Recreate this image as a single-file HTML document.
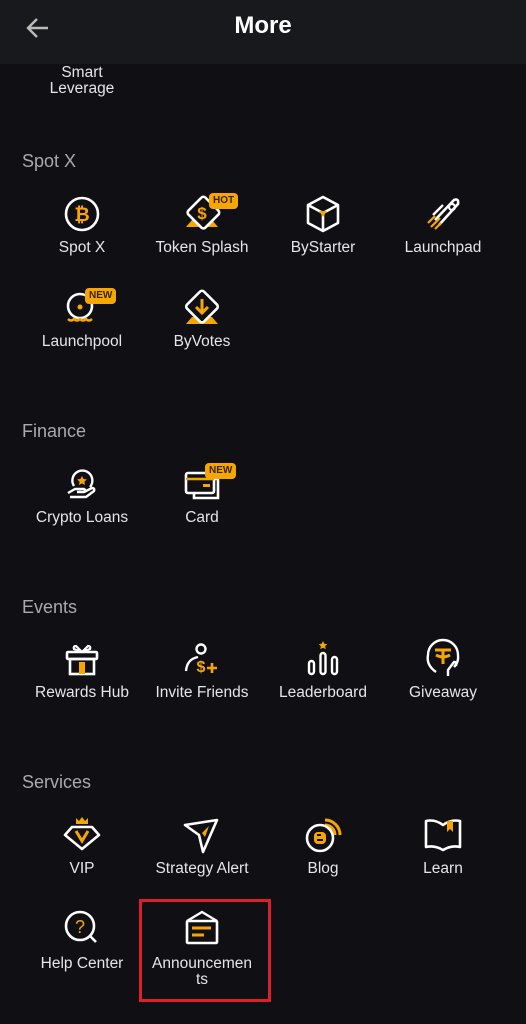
<!DOCTYPE html>
<html><head><meta charset="utf-8"><style>
*{margin:0;padding:0;box-sizing:border-box}
body{width:526px;height:1024px;background:#101014;position:relative;overflow:hidden;font-family:"Liberation Sans",sans-serif;color:#ececef}
.hdr{position:absolute;left:0;top:0;width:526px;height:64px;background:#18191d}
.title{position:absolute;left:0;width:526px;top:12px;text-align:center;font-size:24px;font-weight:bold;color:#fff}
.sec{position:absolute;left:22px;font-size:18px;color:#a9a9ae}
.lbl{position:absolute;width:130px;text-align:center;font-size:15.5px;line-height:16px;color:#e6e6e9}
svg.ic{position:absolute;width:40px;height:40px;overflow:visible}
.badge{position:absolute;background:#f7a600;color:#3a2500;font-size:10px;font-weight:bold;border-radius:4px;padding:2px 4px;line-height:12px}
.red{position:absolute;left:139px;top:899px;width:132px;height:103px;border:3px solid #dc1f2a}
</style></head><body>
<div class="hdr"></div>
<svg style="position:absolute;left:26px;top:17px" width="24" height="22" viewBox="0 0 24 22"><path d="M22 11H3M11 2L2 11l9 9" stroke="#bbb" stroke-width="2.4" fill="none"/></svg>
<div class="title">More</div>
<div class="lbl" style="left:17px;top:65px">Smart<br>Leverage</div>

<div class="sec" style="top:151px">Spot X</div>
<svg class="ic" style="left:62px;top:194px" viewBox="0 0 40 40"><circle cx="20" cy="20" r="16" stroke="#fff" stroke-width="2.6" fill="none"/><text x="20" y="27" text-anchor="middle" font-size="19" font-weight="bold" fill="#f7a600" font-family="Liberation Sans">₿</text></svg>
<div class="lbl" style="left:17px;top:240px">Spot X</div>
<svg class="ic" style="left:182px;top:194px" viewBox="0 0 40 40"><path d="M4 33L10 26H30L36 33Z" fill="#f7a600"/><rect x="8" y="8" width="24" height="24" rx="3" transform="rotate(45 20 20) translate(0 -2)" fill="#101014" stroke="#fff" stroke-width="2.6"/><text x="20" y="25" text-anchor="middle" font-size="17" font-weight="bold" fill="#f7a600" font-family="Liberation Sans">$</text></svg>
<div class="badge" style="left:209px;top:193px">HOT</div>
<div class="lbl" style="left:137px;top:240px">Token Splash</div>
<svg class="ic" style="left:303px;top:194px" viewBox="0 0 40 40"><path d="M20 3L35 11V29L20 37L5 29V11Z M5 11L20 19L35 11 M20 19V37" stroke="#fff" stroke-width="2.6" fill="none" stroke-linejoin="round"/><path d="M16 17L24 17L20 23Z" fill="#f7a600"/></svg>
<div class="lbl" style="left:258px;top:240px">ByStarter</div>
<svg class="ic" style="left:423px;top:194px" viewBox="0 0 40 40"><path d="M12 26L31 6Q36 4 35 10L16 31" stroke="#fff" stroke-width="2.6" fill="none" stroke-linejoin="round"/><path d="M10 21L20 11" stroke="#fff" stroke-width="2.4"/><circle cx="29" cy="13" r="3" stroke="#fff" stroke-width="2.2" fill="none"/><path d="M8 33L17 24M5 29L12 22M12 35L18 29" stroke="#f7a600" stroke-width="2.2"/></svg>
<div class="lbl" style="left:378px;top:240px">Launchpad</div>

<svg class="ic" style="left:62px;top:288px" viewBox="0 0 40 40"><circle cx="18" cy="18" r="12" stroke="#fff" stroke-width="2.6" fill="none"/><circle cx="18" cy="19" r="2.5" fill="#f7a600"/><path d="M6 31q3 3 6 0q3 3 6 0q3 3 6 0q3 3 6 0" stroke="#f7a600" stroke-width="2.4" fill="none"/></svg>
<div class="badge" style="left:85px;top:288px">NEW</div>
<div class="lbl" style="left:17px;top:334px">Launchpool</div>
<svg class="ic" style="left:182px;top:288px" viewBox="0 0 40 40"><path d="M4 36L10 29H30L36 36Z" fill="#f7a600"/><rect x="8" y="8" width="24" height="24" rx="3" transform="rotate(45 20 20) translate(-1 -1)" fill="#101014" stroke="#fff" stroke-width="2.6"/><path d="M20 11V24M14 19L20 25L26 19" stroke="#f7a600" stroke-width="3" fill="none"/></svg>
<div class="lbl" style="left:137px;top:334px">ByVotes</div>

<div class="sec" style="top:421px">Finance</div>
<svg class="ic" style="left:62px;top:464px" viewBox="0 0 40 40"><path d="M12 22A10 10 0 1 1 28 23" stroke="#fff" stroke-width="2.4" fill="none"/><path d="M20 12l1.5 3 3.3.4-2.4 2.3.6 3.3-3-1.6-3 1.6.6-3.3-2.4-2.3 3.3-.4z" fill="#f7a600"/><path d="M6 29L13 25H22Q24 26 22 28H15M22 28L30 24Q33 24 32 27L24 33H8" stroke="#fff" stroke-width="2.4" fill="none" stroke-linejoin="round"/></svg>
<div class="lbl" style="left:17px;top:510px">Crypto Loans</div>
<svg class="ic" style="left:182px;top:464px" viewBox="0 0 40 40"><rect x="4" y="9" width="28" height="20" rx="2" stroke="#fff" stroke-width="2.6" fill="none"/><path d="M4 15H32" stroke="#f7a600" stroke-width="2.6"/><rect x="21" y="20" width="7" height="3" fill="#f7a600"/><path d="M32 15H36V34H12V29" stroke="#fff" stroke-width="2.6" fill="none"/></svg>
<div class="badge" style="left:205px;top:463px">NEW</div>
<div class="lbl" style="left:137px;top:510px">Card</div>

<div class="sec" style="top:597px">Events</div>
<svg class="ic" style="left:62px;top:640px" viewBox="0 0 40 40"><rect x="5" y="12" width="30" height="7" rx="1" stroke="#fff" stroke-width="2.6" fill="none"/><rect x="8" y="19" width="24" height="15" stroke="#fff" stroke-width="2.6" fill="none"/><rect x="17" y="22" width="6" height="12" fill="#f7a600"/><path d="M20 12L14 6Q11 6 12 9L20 12L26 6Q29 6 28 9Z" stroke="#fff" stroke-width="2.2" fill="none"/></svg>
<div class="lbl" style="left:17px;top:685px">Rewards Hub</div>
<svg class="ic" style="left:182px;top:640px" viewBox="0 0 40 40"><circle cx="19" cy="9" r="4.5" stroke="#fff" stroke-width="2.4" fill="none"/><path d="M4 31Q5 19 16 17" stroke="#fff" stroke-width="2.4" fill="none"/><text x="19" y="32" text-anchor="middle" font-size="16" font-weight="bold" fill="#f7a600" font-family="Liberation Sans">$</text><path d="M30 23V33M25 28H35" stroke="#f7a600" stroke-width="2.6"/></svg>
<div class="lbl" style="left:137px;top:685px">Invite Friends</div>
<svg class="ic" style="left:303px;top:640px" viewBox="0 0 40 40"><rect x="6" y="21" width="5" height="13" rx="2.5" stroke="#fff" stroke-width="2.4" fill="none"/><rect x="17.5" y="13" width="5" height="21" rx="2.5" stroke="#fff" stroke-width="2.4" fill="none"/><rect x="29" y="17" width="5" height="17" rx="2.5" stroke="#fff" stroke-width="2.4" fill="none"/><path d="M20 1l1.3 2.7 3 .4-2.2 2 .6 3-2.7-1.4-2.7 1.4.6-3-2.2-2 3-.4z" fill="#f7a600"/></svg>
<div class="lbl" style="left:258px;top:685px">Leaderboard</div>
<svg class="ic" style="left:423px;top:640px" viewBox="0 0 40 40"><path d="M13 32Q3 25 5 15A15 15 0 0 1 35 15Q36 22 31 27" stroke="#fff" stroke-width="2.4" fill="none"/><path d="M12 10H28M20 10V24M13 15Q20 19 27 15" stroke="#f7a600" stroke-width="3" fill="none"/><path d="M25 36V30L31 22Q34 22 33 26" stroke="#fff" stroke-width="2.4" fill="none"/></svg>
<div class="lbl" style="left:378px;top:685px">Giveaway</div>

<div class="sec" style="top:772px">Services</div>
<svg class="ic" style="left:62px;top:815px" viewBox="0 0 40 40"><path d="M14 9L14 3L17 6L20 2L23 6L26 3L26 9Z" fill="#f7a600"/><path d="M10 12H30L37 20L20 34L3 20Z" stroke="#fff" stroke-width="2.6" fill="none" stroke-linejoin="round"/><path d="M14 16L20 26L26 16" stroke="#f7a600" stroke-width="3" fill="none"/></svg>
<div class="lbl" style="left:17px;top:861px">VIP</div>
<svg class="ic" style="left:182px;top:815px" viewBox="0 0 40 40"><path d="M3 10L35 5L21 37L17 20Z" stroke="#fff" stroke-width="2.6" fill="none" stroke-linejoin="round"/><path d="M20 18L27 11L23 22Z" fill="#f7a600"/></svg>
<div class="lbl" style="left:137px;top:861px">Strategy Alert</div>
<svg class="ic" style="left:303px;top:815px" viewBox="0 0 40 40"><path d="M22 5A15 15 0 0 1 37 20" stroke="#f7a600" stroke-width="3" fill="none"/><path d="M22 10A10 10 0 0 1 32 20" stroke="#f7a600" stroke-width="3" fill="none"/><circle cx="17" cy="23" r="13" stroke="#fff" stroke-width="2.6" fill="#101014"/><rect x="11" y="17" width="12" height="12" rx="4" fill="#f7a600"/><path d="M14 20H18M14 25H20" stroke="#101014" stroke-width="2"/></svg>
<div class="lbl" style="left:258px;top:861px">Blog</div>
<svg class="ic" style="left:423px;top:815px" viewBox="0 0 40 40"><path d="M3 6Q12 4 20 10Q28 4 37 6V32Q28 30 20 35Q12 30 3 32Z" stroke="#fff" stroke-width="2.6" fill="none" stroke-linejoin="round"/><path d="M24 6H30V17L27 14L24 17Z" fill="#f7a600"/></svg>
<div class="lbl" style="left:378px;top:861px">Learn</div>

<svg class="ic" style="left:62px;top:908px" viewBox="0 0 40 40"><circle cx="18" cy="18" r="14" stroke="#fff" stroke-width="2.6" fill="none"/><path d="M28 28L34 34" stroke="#fff" stroke-width="2.6"/><text x="18" y="25" text-anchor="middle" font-size="18" fill="#f7a600" font-family="Liberation Sans">?</text></svg>
<div class="lbl" style="left:17px;top:956px">Help Center</div>
<svg class="ic" style="left:182px;top:908px" viewBox="0 0 40 40"><path d="M5 13L20 4L35 13" stroke="#fff" stroke-width="2.4" fill="none"/><rect x="5" y="13" width="30" height="22" rx="1" stroke="#fff" stroke-width="2.6" fill="none"/><path d="M10 20H29M10 27H22" stroke="#f7a600" stroke-width="3"/></svg>
<div class="lbl" style="left:137px;top:956px">Announcemen<br>ts</div>
<div class="red"></div>
</body></html>
